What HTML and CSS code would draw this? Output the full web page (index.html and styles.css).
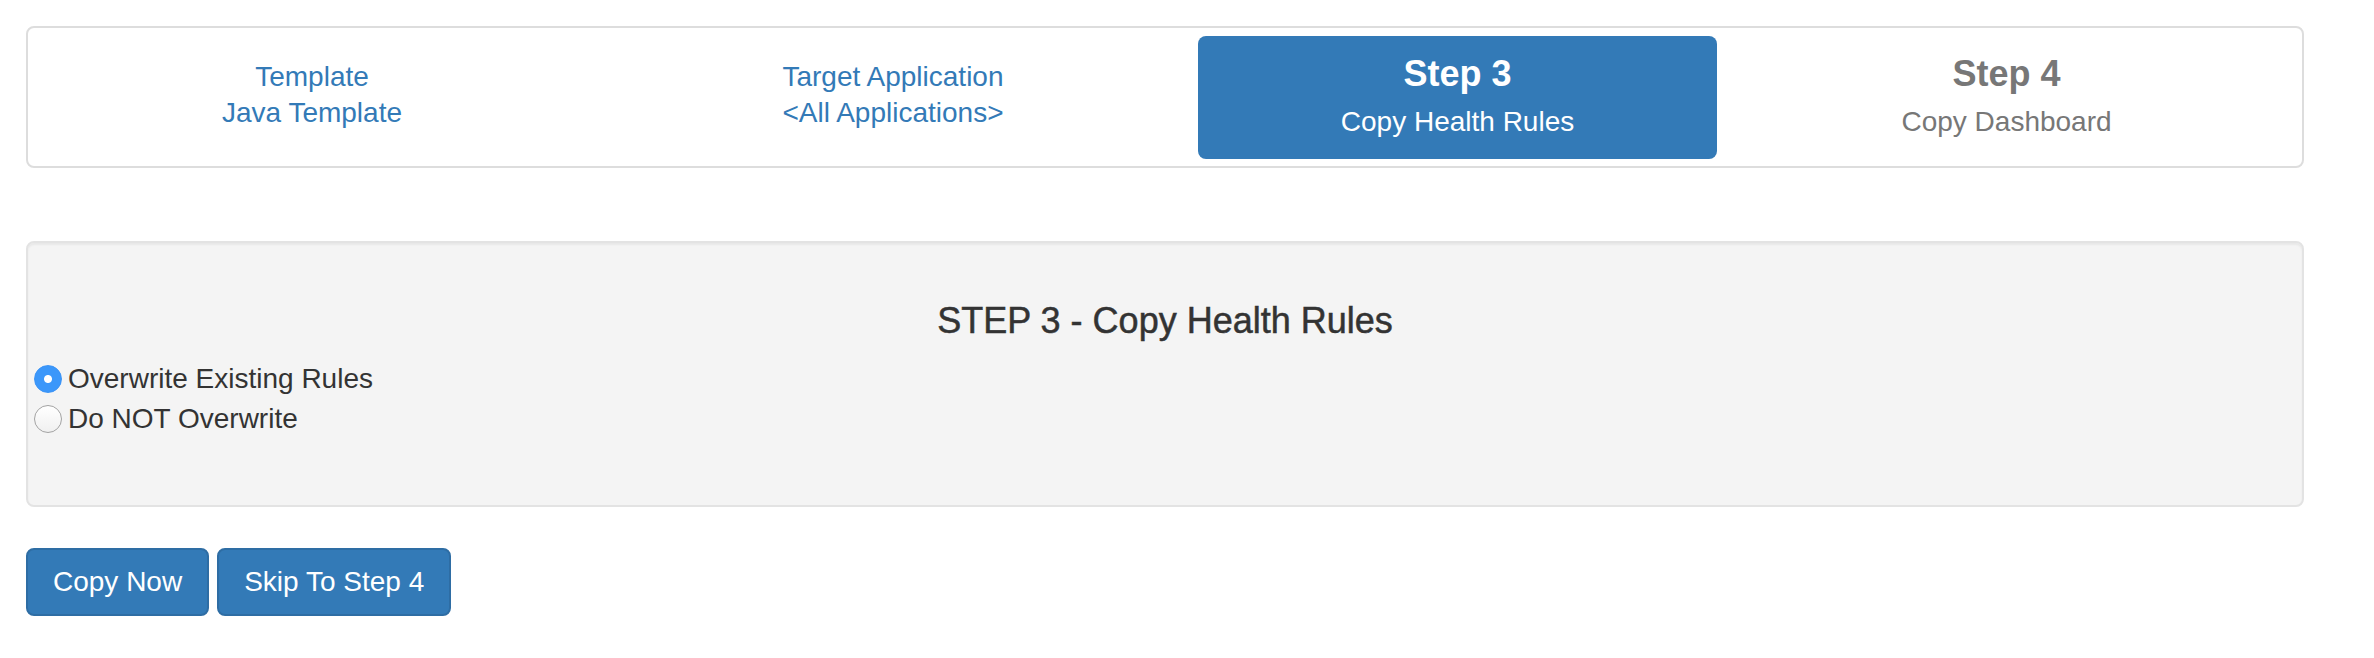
FILE: index.html
```html
<!DOCTYPE html>
<html lang="en">
<head>
<meta charset="utf-8">
<title>Copy Health Rules</title>
<link rel="stylesheet" href="styles.css">
</head>
<body>
<div class="page">
  <nav class="steps">
    <a class="step step-link" href="#">
      <span>Template</span>
      <span>Java Template</span>
    </a>
    <a class="step step-link" href="#">
      <span>Target Application</span>
      <span>&lt;All Applications&gt;</span>
    </a>
    <div class="step step-major step-active">
      <span class="step-title">Step 3</span>
      <span class="step-sub">Copy Health Rules</span>
    </div>
    <div class="step step-major step-pending">
      <span class="step-title">Step 4</span>
      <span class="step-sub">Copy Dashboard</span>
    </div>
  </nav>

  <section class="well">
    <h4 class="well-title">STEP 3 - Copy Health Rules</h4>
    <label class="radio"><input type="radio" name="overwrite" checked>Overwrite Existing Rules</label>
    <label class="radio"><input type="radio" name="overwrite">Do NOT Overwrite</label>
  </section>

  <div class="actions">
    <button class="btn" type="button">Copy Now</button>
    <button class="btn" type="button">Skip To Step 4</button>
  </div>
</div>
</body>
</html>
```

FILE: styles.css
```css
html, body {
  margin: 0;
  background: #fff;
}

body {
  font-family: "Liberation Sans", Arial, Helvetica, sans-serif;
  font-size: 28px;
  line-height: 40px;
  color: #333;
}

.page {
  width: 2278px;
  padding: 26px 0 0 26px;
}

/* Wizard step bar */
.steps {
  display: grid;
  grid-template-columns: 552fr 606fr 519fr 575fr;
  column-gap: 2px;
  padding: 8px 8px 7px;
  border: 2px solid #ddd;
  border-radius: 8px;
}

.step {
  box-sizing: border-box;
  height: 123px;
  display: flex;
  flex-direction: column;
  align-items: center;
  text-decoration: none;
  border-radius: 8px;
}

.step-link {
  color: #337ab7;
  padding-top: 23px;
  line-height: 36px;
}

.step-major {
  padding-top: 18px;
}

.step-title {
  font-size: 36px;
  font-weight: bold;
  line-height: 40px;
}

.step-sub {
  margin-top: 8px;
}

.step-active {
  background: #337ab7;
  color: #fff;
}

.step-pending {
  color: #777;
}

/* Panel */
.well {
  margin-top: 73px;
  padding: 58px 6px 66px;
  background: #f4f4f4;
  border: 2px solid #e3e3e3;
  border-radius: 8px;
  box-shadow: inset 0 2px 2px rgba(0, 0, 0, 0.05);
}

.well-title {
  margin: 0 0 18px;
  text-align: center;
  font-size: 36px;
  line-height: 40px;
  font-weight: 500;
  color: #333;
  -webkit-text-stroke: 0.5px #333;
}

.radio {
  display: flex;
  align-items: center;
  gap: 6px;
  color: #333;
}

.radio input {
  -webkit-appearance: none;
  appearance: none;
  box-sizing: border-box;
  width: 28px;
  height: 28px;
  margin: 0;
  border-radius: 50%;
  border: 1.5px solid #a3a3a3;
  background: linear-gradient(#ffffff, #f0f0f0);
}

.radio input:checked {
  border-color: #3a93f6;
  background: radial-gradient(circle, #fff 0 3.5px, #3b97fa 4.5px);
}

/* Buttons */
.actions {
  margin-top: 41px;
  display: flex;
  gap: 8px;
}

.btn {
  font: inherit;
  line-height: 40px;
  color: #fff;
  background: #337ab7;
  border: 2px solid #2e6da4;
  border-radius: 8px;
  padding: 12px 25px;
  cursor: pointer;
}
```
